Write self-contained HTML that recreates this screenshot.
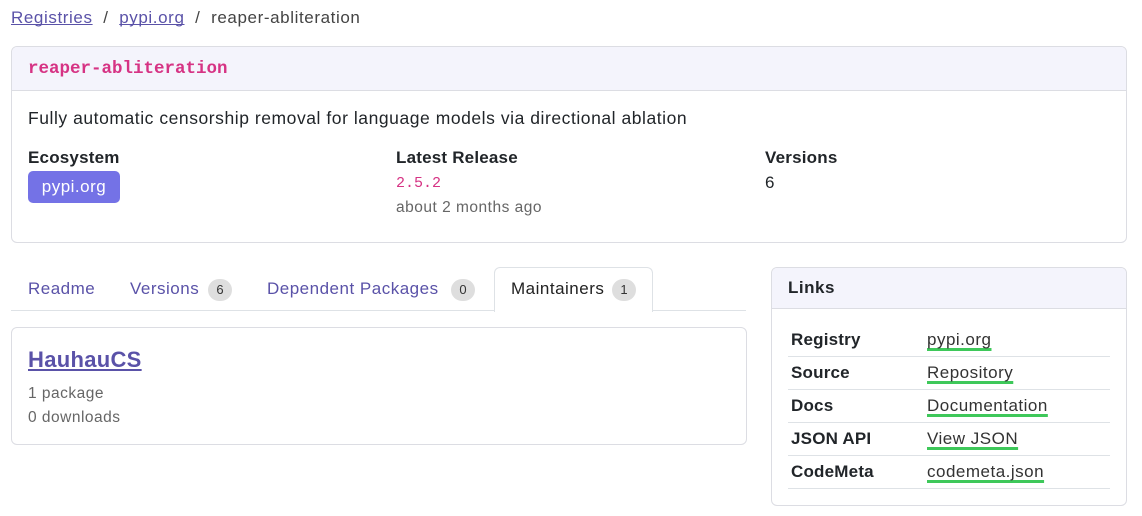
<!DOCTYPE html>
<html><head><meta charset="utf-8"><style>
*{box-sizing:border-box;margin:0;padding:0}
body{width:1142px;height:516px;background:#fff;font-family:"Liberation Sans",sans-serif;color:#212529;position:relative;overflow:hidden;letter-spacing:0.5px}
.a{position:absolute;white-space:nowrap}
.purple{color:#5a52a8}
.mono{font-family:"Liberation Mono",monospace;color:#d63384;letter-spacing:0}
.card{position:absolute;border:1px solid #dcdde3;border-radius:6px;overflow:hidden;background:#fff}
.hd{background:#f4f4fc;border-bottom:1px solid #dcdde3}
.pill{position:absolute;width:24px;height:22px;border-radius:11px;background:#dedede;font-size:13px;color:#333;text-align:center;line-height:22px;letter-spacing:0}
.lbl{font-weight:bold;font-size:17px;letter-spacing:0.2px}
.row{position:absolute;left:16px;width:322px;height:33px;border-bottom:1px solid #dee2e6}
.row b{position:absolute;left:3px;top:6px;font-size:17px;letter-spacing:0.2px}
.row span{position:absolute;left:139px;top:6px;font-size:17px;color:#333;text-decoration:underline;text-decoration-color:#3ec85a;text-decoration-thickness:3px;text-underline-offset:3px;text-decoration-skip-ink:none}
u{text-decoration-skip-ink:none}
</style></head><body>
<div class="a" style="left:11px;top:8px;font-size:17px;color:#444;letter-spacing:0.6px"><u class="purple">Registries</u> &nbsp;/ &nbsp;<u class="purple">pypi.org</u> &nbsp;/ &nbsp;reaper-abliteration</div>

<div class="card" style="left:11px;top:46px;width:1116px;height:197px">
 <div class="hd" style="height:44px"></div>
 <div class="a mono" style="left:16px;top:12px;font-size:17.5px;font-weight:bold">reaper-abliteration</div>
 <div class="a" style="left:16px;top:61px;font-size:17.5px;letter-spacing:0.55px">Fully automatic censorship removal for language models via directional ablation</div>
 <div class="a lbl" style="left:16px;top:101px">Ecosystem</div>
 <div class="a" style="left:16px;top:124px;width:92px;height:32px;background:#7472e6;border-radius:5px;color:#fff;font-size:17px;text-align:center;line-height:32px">pypi.org</div>
 <div class="a lbl" style="left:384px;top:101px">Latest Release</div>
 <div class="a mono" style="left:384px;top:128px;font-size:15px">2.5.2</div>
 <div class="a" style="left:384px;top:152px;font-size:15.5px;color:#666">about 2 months ago</div>
 <div class="a lbl" style="left:753px;top:101px">Versions</div>
 <div class="a" style="left:753px;top:126px;font-size:17px">6</div>
</div>

<div class="a" style="left:11px;top:310px;width:735px;height:1px;background:#dee2e6"></div>
<div class="a" style="left:494px;top:267px;width:159px;height:45px;border:1px solid #dee2e6;border-bottom:none;border-radius:6px 6px 0 0;background:#fff"></div>
<div class="a purple" style="left:28px;top:279px;font-size:17px">Readme</div>
<div class="a purple" style="left:130px;top:279px;font-size:17px">Versions</div>
<div class="pill" style="left:208px;top:279px">6</div>
<div class="a purple" style="left:267px;top:279px;font-size:17px">Dependent Packages</div>
<div class="pill" style="left:451px;top:279px">0</div>
<div class="a" style="left:511px;top:279px;font-size:17px;color:#222">Maintainers</div>
<div class="pill" style="left:612px;top:279px">1</div>

<div class="card" style="left:11px;top:327px;width:736px;height:118px">
 <div class="a purple" style="left:16px;top:19px;font-size:22px;font-weight:bold;text-decoration:underline;letter-spacing:0.3px">HauhauCS</div>
 <div class="a" style="left:16px;top:57px;font-size:15.5px;color:#666">1 package</div>
 <div class="a" style="left:16px;top:81px;font-size:15.5px;color:#666">0 downloads</div>
</div>

<div class="card" style="left:771px;top:267px;width:356px;height:239px">
 <div class="hd" style="height:41px"></div>
 <div class="a" style="left:16px;top:10px;font-size:17px;font-weight:bold">Links</div>
 <div class="row" style="top:56px"><b>Registry</b><span>pypi.org</span></div>
 <div class="row" style="top:89px"><b>Source</b><span>Repository</span></div>
 <div class="row" style="top:122px"><b>Docs</b><span>Documentation</span></div>
 <div class="row" style="top:155px"><b>JSON API</b><span>View JSON</span></div>
 <div class="row" style="top:188px"><b>CodeMeta</b><span>codemeta.json</span></div>
</div>
</body></html>
